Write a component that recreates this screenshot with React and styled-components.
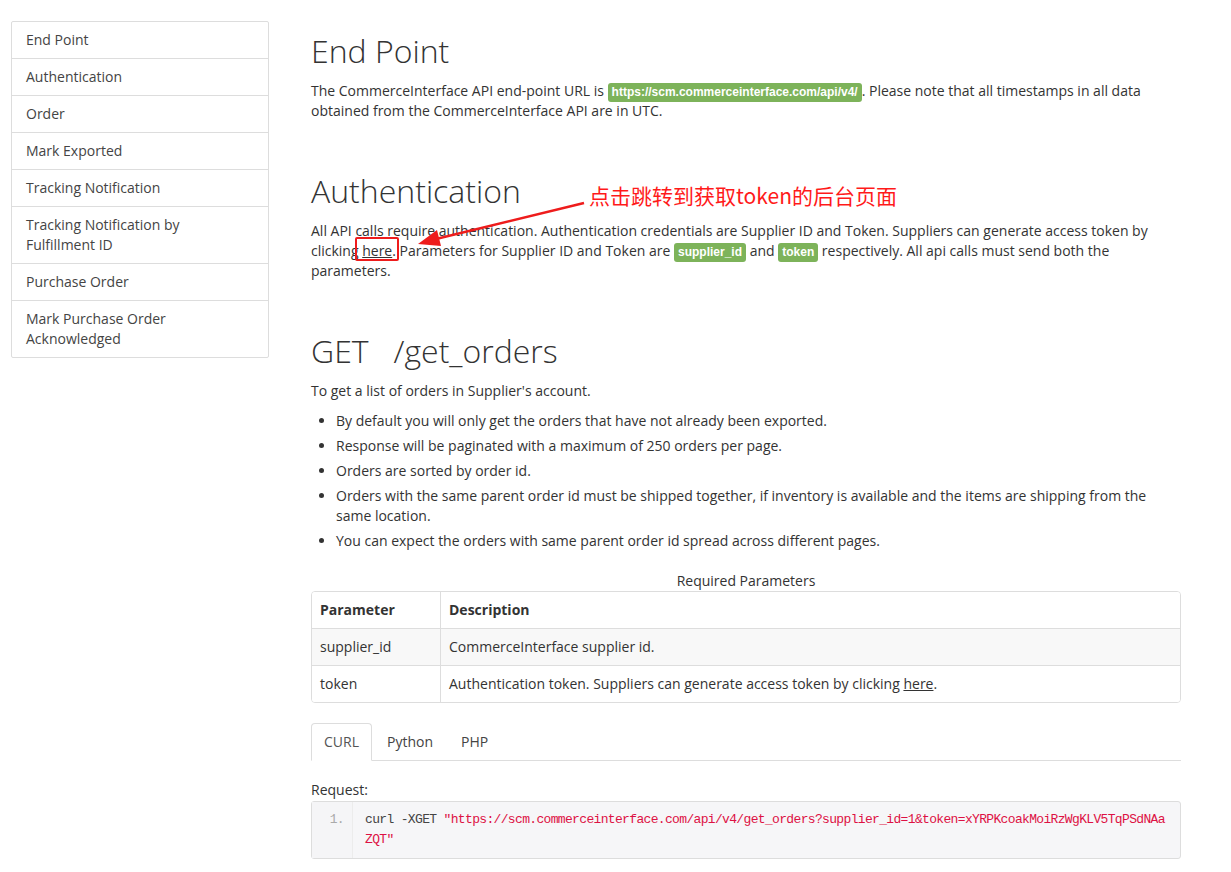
import React from 'react';
import styled, { createGlobalStyle } from 'styled-components';

const GlobalStyle = createGlobalStyle`
  html, body {
    margin: 0;
    padding: 0;
    background: #fff;
  }
  body {
    font-family: 'Open Sans', 'Noto Sans', sans-serif;
    font-size: 14px;
    line-height: 20px;
    color: #333;
  }
`;

const Page = styled.div`
  position: relative;
  display: flex;
  align-items: flex-start;
  padding: 21px 0 0 11px;
  width: 1231px;
  box-sizing: border-box;
`;

const Sidebar = styled.ul`
  list-style: none;
  margin: 0;
  padding: 0;
  width: 258px;
  box-sizing: border-box;
  border: 1px solid #ddd;
  border-radius: 2px;
  flex-shrink: 0;
`;

const NavItem = styled.li`
  padding: 8px 30px 8px 14px;
  line-height: 20px;
  color: #444;
  & + & {
    border-top: 1px solid #ddd;
  }
`;

const Main = styled.main`
  width: 870px;
  margin-left: 42px;
  padding-top: 12px;
`;

const Section = styled.section`
  & + & {
    margin-top: 52px;
  }
`;

const Heading = styled.h1`
  font-size: 32px;
  line-height: 35px;
  font-weight: 300;
  color: #333;
  margin: 0 0 13px;
  white-space: pre;
`;

const Para = styled.p`
  margin: 0 0 10px;
`;

const Badge = styled.code`
  background: #7db35a;
  color: #fff;
  font-family: 'Liberation Sans', Arial, sans-serif;
  font-weight: 700;
  font-size: 12px;
  line-height: 12px;
  padding: 2px 4px 3px;
  border-radius: 3px;
`;

const TextLink = styled.a`
  color: #333;
  text-decoration: underline;
`;

const Bullets = styled.ul`
  margin: 0 0 20px;
  padding-left: 25px;
  li {
    margin-bottom: 5px;
  }
`;

const Caption = styled.div`
  text-align: center;
  line-height: 20px;
`;

const Table = styled.div`
  border: 1px solid #ddd;
  border-radius: 4px;
  overflow: hidden;
`;

const Row = styled.div`
  display: grid;
  grid-template-columns: 128px 1fr;
  background: ${p => (p.$striped ? '#f8f8f8' : '#fff')};
  font-weight: ${p => (p.$head ? 700 : 400)};
  & + & {
    border-top: 1px solid #ddd;
  }
`;

const Cell = styled.div`
  padding: 8px;
  & + & {
    border-left: 1px solid #ddd;
  }
`;

const Tabs = styled.div`
  display: flex;
  margin-top: 20px;
  border-bottom: 1px solid #ddd;
`;

const Tab = styled.div`
  padding: 8px 12px;
  margin-right: 2px;
  margin-bottom: -1px;
  line-height: 20px;
  border: 1px solid ${p => (p.$active ? '#ddd' : 'transparent')};
  border-bottom-color: ${p => (p.$active ? '#fff' : 'transparent')};
  border-radius: 4px 4px 0 0;
  background: ${p => (p.$active ? '#fff' : 'transparent')};
  color: ${p => (p.$active ? '#555' : '#444')};
`;

const Label = styled.div`
  margin-top: 19px;
  line-height: 20px;
`;

const CodeBox = styled.div`
  display: flex;
  margin-top: 1px;
  border: 1px solid #ddd;
  border-radius: 3px;
  background: #f6f6f8;
  font-family: 'Liberation Mono', 'DejaVu Sans Mono', monospace;
  font-size: 13px;
  letter-spacing: -0.66px;
  line-height: 20px;
`;

const Gutter = styled.div`
  width: 41px;
  flex-shrink: 0;
  box-sizing: border-box;
  padding: 8px 8px 0 0;
  text-align: right;
  color: #aaa;
  border-right: 1px solid #ececec;
  background: #f5f5f7;
`;

const CodeText = styled.div`
  flex: 1;
  padding: 8px 12px 8px 12px;
  word-break: break-all;
  color: #444;
`;

const Str = styled.span`
  color: #dd1144;
`;

const Note = styled.div`
  position: absolute;
  left: 589px;
  top: 181px;
  color: #ff1a1a;
  font-family: 'Noto Sans CJK SC', sans-serif;
  font-size: 21px;
  line-height: 28px;
  font-weight: 400;
  white-space: nowrap;
`;

const HereBox = styled.div`
  position: absolute;
  left: 355px;
  top: 237px;
  width: 44px;
  height: 24px;
  box-sizing: border-box;
  border: 2px solid #ee1c1c;
  border-radius: 2px;
`;

const ArrowSvg = styled.svg`
  position: absolute;
  left: 0;
  top: 0;
  pointer-events: none;
`;

const navItems = [
  'End Point',
  'Authentication',
  'Order',
  'Mark Exported',
  'Tracking Notification',
  'Tracking Notification by Fulfillment ID',
  'Purchase Order',
  'Mark Purchase Order Acknowledged',
];

const bullets = [
  'By default you will only get the orders that have not already been exported.',
  'Response will be paginated with a maximum of 250 orders per page.',
  'Orders are sorted by order id.',
  'Orders with the same parent order id must be shipped together, if inventory is available and the items are shipping from the same location.',
  'You can expect the orders with same parent order id spread across different pages.',
];

export default function App() {
  return (
    <>
      <GlobalStyle />
      <Page>
        <Sidebar>
          {navItems.map(item => (
            <NavItem key={item}>{item}</NavItem>
          ))}
        </Sidebar>

        <Main>
          <Section>
            <Heading>End Point</Heading>
            <Para>
              The CommerceInterface API end-point URL is{' '}
              <Badge>https://scm.commerceinterface.com/api/v4/</Badge>. Please note that all
              timestamps in all data obtained from the CommerceInterface API are in UTC.
            </Para>
          </Section>

          <Section>
            <Heading>Authentication</Heading>
            <Para>
              All API calls require authentication. Authentication credentials are Supplier ID
              and Token. Suppliers can generate access token by clicking{' '}
              <TextLink>here</TextLink>. Parameters for Supplier ID and Token are{' '}
              <Badge>supplier_id</Badge> and <Badge>token</Badge> respectively. All api calls
              must send both the parameters.
            </Para>
          </Section>

          <Section>
            <Heading>{'GET   /get_orders'}</Heading>
            <Para>To get a list of orders in Supplier's account.</Para>
            <Bullets>
              {bullets.map(b => (
                <li key={b}>{b}</li>
              ))}
            </Bullets>

            <Caption>Required Parameters</Caption>
            <Table>
              <Row $head>
                <Cell>Parameter</Cell>
                <Cell>Description</Cell>
              </Row>
              <Row $striped>
                <Cell>supplier_id</Cell>
                <Cell>CommerceInterface supplier id.</Cell>
              </Row>
              <Row>
                <Cell>token</Cell>
                <Cell>
                  Authentication token. Suppliers can generate access token by clicking{' '}
                  <TextLink>here</TextLink>.
                </Cell>
              </Row>
            </Table>

            <Tabs>
              <Tab $active>CURL</Tab>
              <Tab>Python</Tab>
              <Tab>PHP</Tab>
            </Tabs>

            <Label>Request:</Label>
            <CodeBox>
              <Gutter>1.</Gutter>
              <CodeText>
                curl -XGET{' '}
                <Str>
                  "https://scm.commerceinterface.com/api/v4/get_orders?supplier_id=1&amp;token=xYRPKcoakMoiRzWgKLV5TqPSdNAaZQT"
                </Str>
              </CodeText>
            </CodeBox>
          </Section>
        </Main>

        <Note>点击跳转到获取token的后台页面</Note>
        <HereBox />
        <ArrowSvg width="1231" height="872" viewBox="0 0 1231 872">
          <line x1="584" y1="203" x2="436" y2="239" stroke="#ee1c1c" strokeWidth="2.5" />
          <polygon points="418,244 437,230 441,246" fill="#ee1c1c" />
        </ArrowSvg>
      </Page>
    </>
  );
}
